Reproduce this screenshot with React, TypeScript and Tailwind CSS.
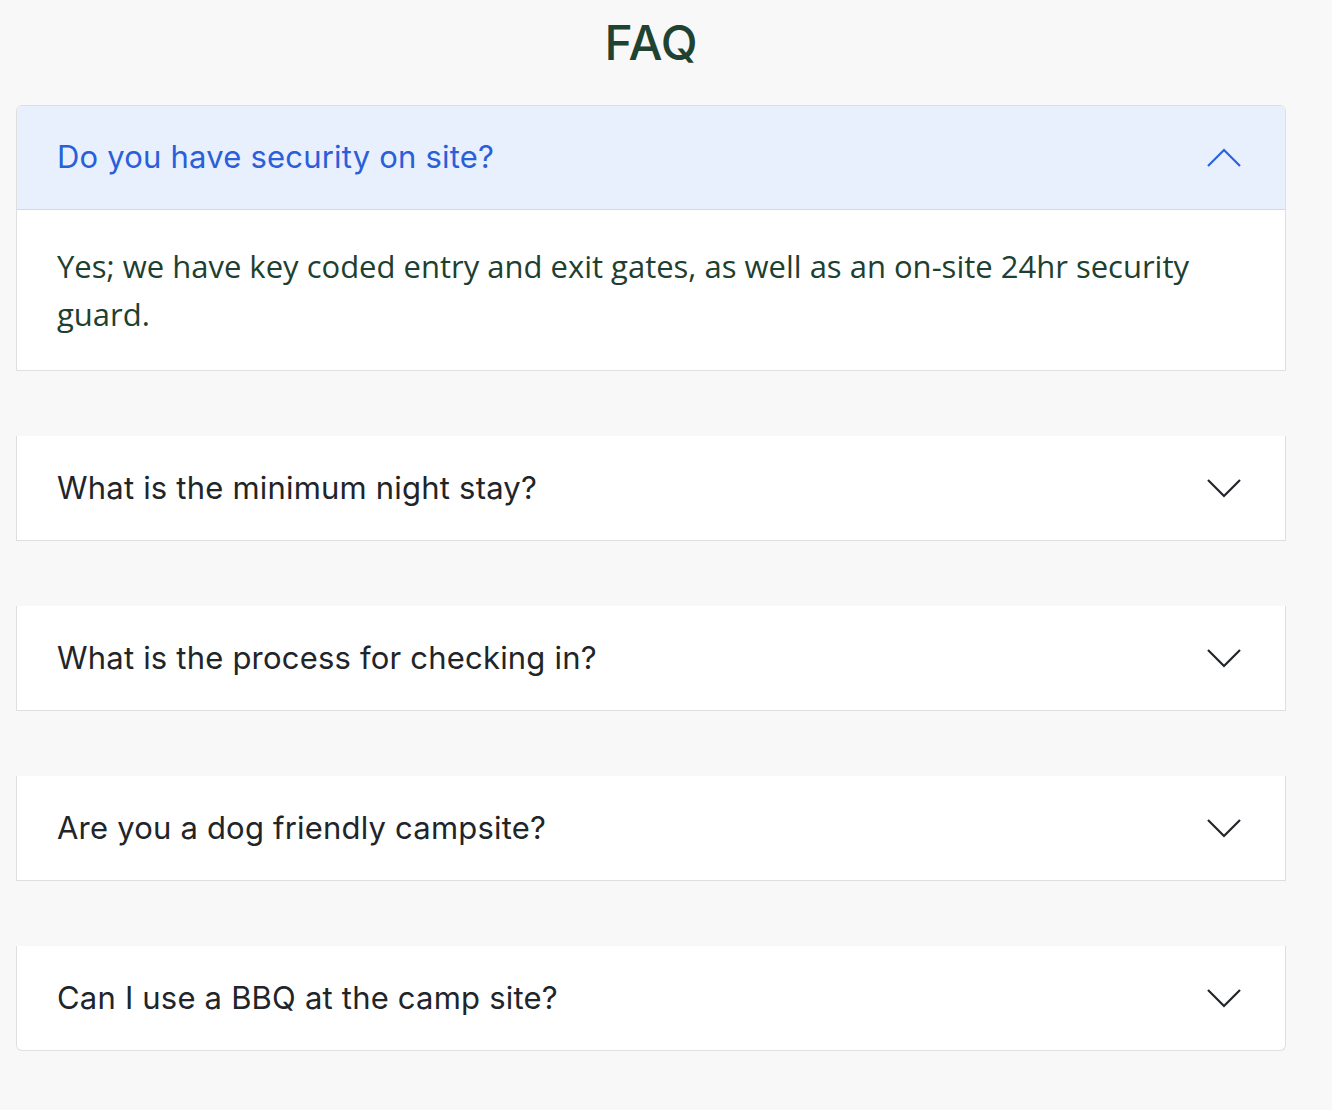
import React, { useState } from 'react';

const faqs = [
  {
    q: 'Do you have security on site?',
    a: 'Yes; we have key coded entry and exit gates, as well as an on-site 24hr security guard.',
  },
  { q: 'What is the minimum night stay?', a: 'Our minimum stay is two nights.' },
  { q: 'What is the process for checking in?', a: 'Head to reception on arrival and we will show you to your pitch.' },
  { q: 'Are you a dog friendly campsite?', a: 'Yes, well behaved dogs on leads are welcome.' },
  { q: 'Can I use a BBQ at the camp site?', a: 'Raised BBQs are allowed on all pitches.' },
];

const Chevron = ({ up }: { up: boolean }) => (
  <svg width="34" height="19" viewBox="0 0 34 19" fill="none" className={up ? 'text-[#2b63de]' : 'text-[#212529]'}>
    {up ? (
      <path d="M1 18 L17 2 L33 18" stroke="currentColor" strokeWidth="2.2" />
    ) : (
      <path d="M1 1 L17 17 L33 1" stroke="currentColor" strokeWidth="2.2" />
    )}
  </svg>
);

export default function App() {
  const [open, setOpen] = useState(0);

  return (
    <div className="bg-[#f8f8f8] pl-4 pr-[46px] pt-[14px] min-h-[1110px]">
      <h1 className="mb-[33px] text-center text-[48px] leading-[58px] font-medium text-[#1f4231] font-['Inter',sans-serif]">
        FAQ
      </h1>
      <div className="flex flex-col gap-[65px]">
        {faqs.map((item, i) => {
          const isOpen = open === i;
          const first = i === 0;
          const last = i === faqs.length - 1;
          return (
            <div
              key={item.q}
              className={`bg-white border-x border-b border-[#dfdfdf] ${first ? 'border-t rounded-t-[6px]' : ''} ${last ? 'rounded-b-[6px]' : ''}`}
            >
              <button
                type="button"
                onClick={() => setOpen(isOpen ? -1 : i)}
                className={`flex h-[104px] w-full items-center justify-between pl-[40px] pr-[44px] text-left font-['Inter',sans-serif] text-[31px] tracking-[0.2px] ${
                  isOpen ? 'bg-[#e8f0fd] text-[#2b5fd9] border-b border-[#d3d9e3]' : 'text-[#212529]'
                } ${first ? 'rounded-t-[5px]' : ''}`}
              >
                <span>{item.q}</span>
                <Chevron up={isOpen} />
              </button>
              {isOpen && (
                <div className="px-[40px] py-[32px] font-['Open_Sans',sans-serif] text-[31px] leading-[48px] text-[#1e4030]">
                  {item.a}
                </div>
              )}
            </div>
          );
        })}
      </div>
    </div>
  );
}
